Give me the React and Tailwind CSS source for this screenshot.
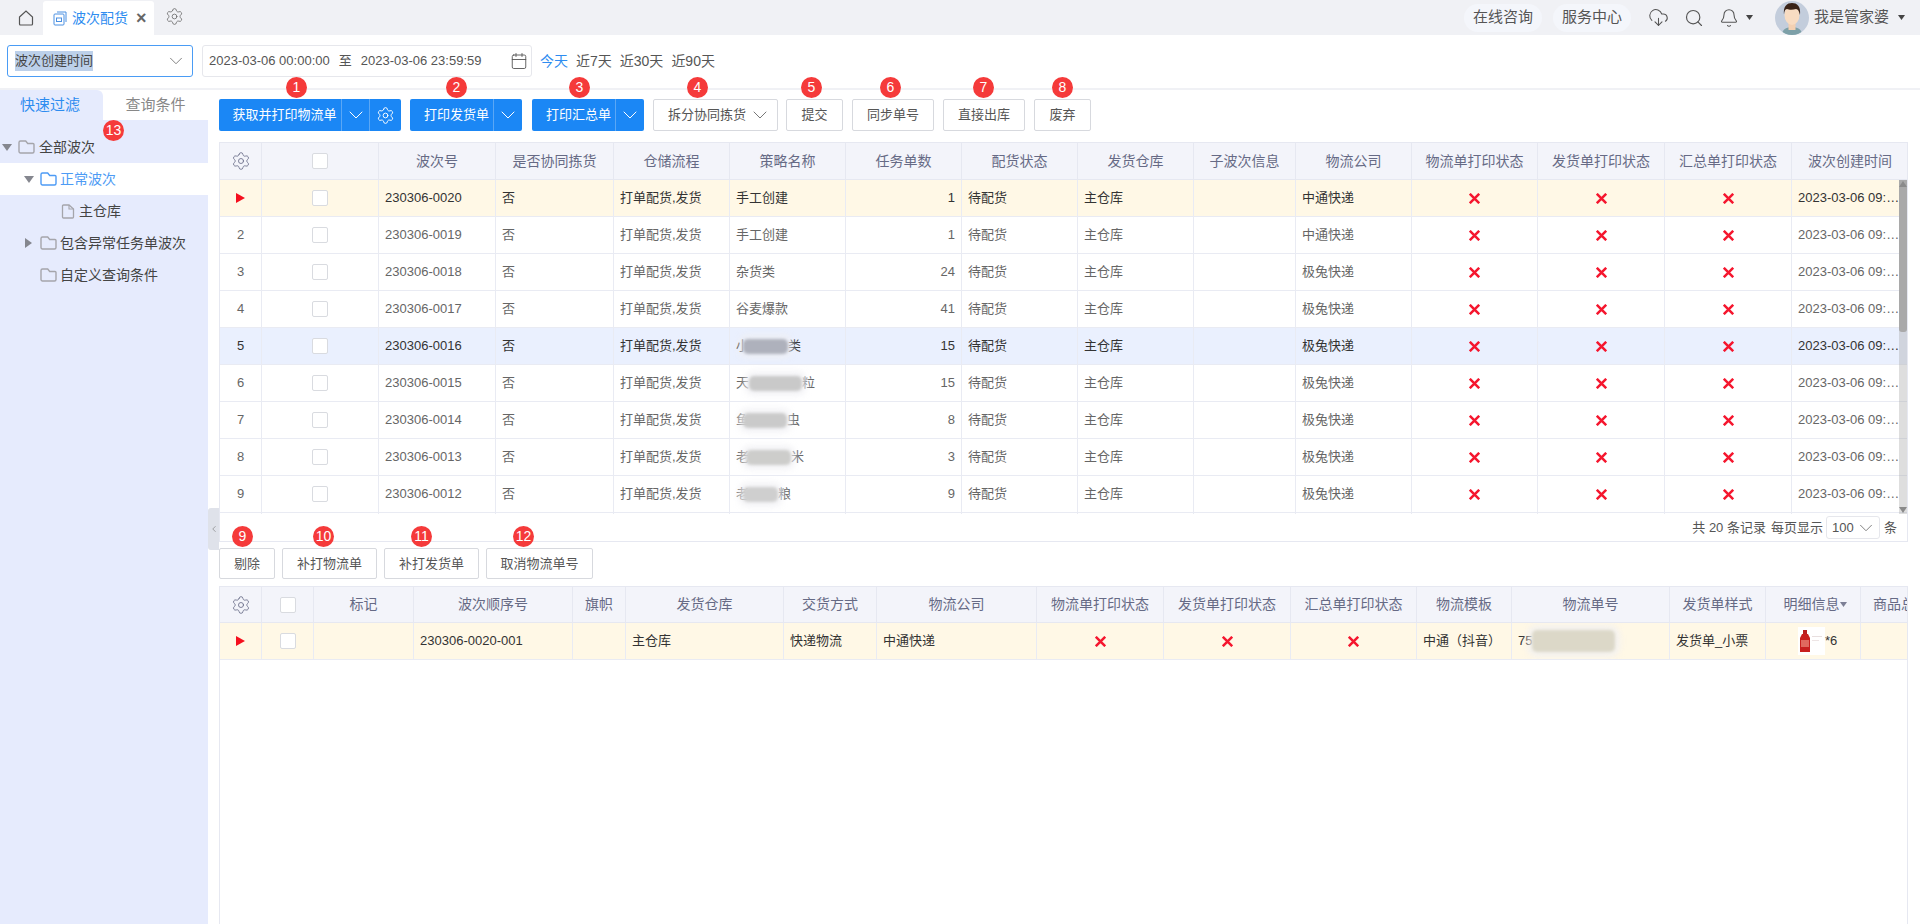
import React from 'react';
import { Settings, ChevronDown, ChevronLeft, Calendar, CloudDownload, Search, Bell } from 'lucide-react';

const mainCols = 'grid grid-cols-[42px_117px_117px_118px_116px_116px_116px_116px_116px_102px_116px_126px_127px_127px_117px]';
const subCols = 'grid grid-cols-[42px_52px_100px_159px_53px_158px_93px_160px_127px_127px_126px_95px_158px_96px_95px_47px]';

const mainHead = ['波次号', '是否协同拣货', '仓储流程', '策略名称', '任务单数', '配货状态', '发货仓库', '子波次信息', '物流公司', '物流单打印状态', '发货单打印状态', '汇总单打印状态', '波次创建时间'];
const subHead = ['标记', '波次顺序号', '旗帜', '发货仓库', '交货方式', '物流公司', '物流单打印状态', '发货单打印状态', '汇总单打印状态', '物流模板', '物流单号', '发货单样式'];

const rows = [
    { no: '0020', name: ['手工创建'], count: 1, express: '中通快递' },
    { no: '0019', name: ['手工创建'], count: 1, express: '中通快递' },
    { no: '0018', name: ['杂货类'], count: 24, express: '极兔快递' },
    { no: '0017', name: ['谷麦爆款'], count: 41, express: '极兔快递' },
    { no: '0016', name: ['小', '类'], blur: 'w-[45px] -ml-[6px] bg-[#aeb1bc]', count: 15, express: '极兔快递' },
    { no: '0015', name: ['天', '粒'], blur: 'w-[53px] bg-[#c9c9c9]', count: 15, express: '极兔快递' },
    { no: '0014', name: ['鱼', '虫'], blur: 'w-[44px] -ml-[6px] bg-[#cacaca]', count: 8, express: '极兔快递' },
    { no: '0013', name: ['老', '米'], blur: 'w-[45px] -ml-[3px] bg-[#cdcdcb]', count: 3, express: '极兔快递' },
    { no: '0012', name: ['老', '粮'], blur: 'w-[35px] -ml-[6px] bg-[#cfcfcf]', count: 9, express: '极兔快递' },
    { no: '0011', name: ['手工创建'], count: 2, express: '极兔快递' },
];

const topButtons = [
    { label: '提交', w: 'w-[57px]', dot: 'left-[15px]', n: 5 },
    { label: '同步单号', w: 'w-[82px]', dot: 'left-[28px]', n: 6 },
    { label: '直接出库', w: 'w-[82px]', dot: 'left-[30px]', n: 7 },
    { label: '废弃', w: 'w-[57px]', dot: 'left-[18px]', n: 8 },
];

const subButtons = [
    { label: '剔除', w: 'w-[56px]', dot: 'left-[13px]', n: 9 },
    { label: '补打物流单', w: 'w-[95px]', dot: 'left-[31px]', n: 10 },
    { label: '补打发货单', w: 'w-[95px]', dot: 'left-[27px]', n: 11 },
    { label: '取消物流单号', w: 'w-[107px]', dot: 'left-[27px]', n: 12 },
];

const Badge = ({ n, className }) => (
    <span className={`absolute w-[21px] h-[21px] rounded-full bg-[#f53a3a] text-white text-[14px] leading-[21px] text-center z-10 ${className}`}>{n}</span>
);

const RedX = () => (
    <svg width="11" height="11" viewBox="0 0 11 11" className="mx-auto">
        <path d="M.8.8 10.2 10.2M10.2.8.8 10.2" stroke="#f5162e" strokeWidth="2.5" />
    </svg>
);

const RowArrow = () => (
    <svg width="9" height="10" viewBox="0 0 9 10"><path d="M0 0 9 5 0 10z" fill="#f50f1e" /></svg>
);

const Check = () => <span className="block w-[16px] h-[16px] rounded-[2px] bg-white border border-[#d9dbe0]" />;

const FolderIcon = ({ color = '#a5a5ab', className = '' }) => (
    <svg width="17" height="14" viewBox="0 0 17 14" fill="none" className={className}>
        <path d="M1 2.5A1.5 1.5 0 0 1 2.5 1h5.2l2 2.5h5.3a1 1 0 0 1 1 1v7a1.5 1.5 0 0 1-1.5 1.5h-12A1.5 1.5 0 0 1 1 11.5z" stroke={color} strokeWidth="1.4" />
    </svg>
);

const FileIcon = () => (
    <svg width="14" height="15" viewBox="0 0 14 15" fill="none">
        <path d="M1.5 2a1 1 0 0 1 1-1h5.5L12.5 5v8a1 1 0 0 1-1 1h-9a1 1 0 0 1-1-1z" stroke="#a5a5ab" strokeWidth="1.3" />
        <path d="M8 1v4h4.5" stroke="#a5a5ab" strokeWidth="1.1" />
    </svg>
);

const Caret = ({ className = '' }) => (
    <svg width="10" height="7" viewBox="0 0 10 7" className={className}><path d="M0 0h10L5 7z" fill="#85878f" /></svg>
);

const Bottle = () => (
    <svg width="27" height="28" viewBox="0 0 27 28" className="bg-white shrink-0">
        <rect x="5" y="3" width="4" height="4" fill="#b92020" />
        <path d="M4 7h6l2 4v14H2V11z" fill="#c8201f" />
        <rect x="3" y="13" width="8" height="7" fill="#e06a5f" />
        <rect x="14" y="9" width="10" height="1" fill="#e8dfdf" />
        <rect x="14" y="13" width="7" height="1" fill="#eee5e5" />
    </svg>
);

const Avatar = () => (
    <svg width="34" height="34" viewBox="0 0 34 34" className="rounded-full">
        <rect width="34" height="34" fill="#c3cddc" />
        <path d="M7 34c0-6 5-8 10-8s10 2 10 8z" fill="#7da0a8" />
        <rect x="13.5" y="20" width="7" height="9" fill="#f3d0b2" />
        <ellipse cx="17" cy="14" rx="7.5" ry="10" fill="#f8dcc2" />
        <path d="M9 14C8 5 12 2 17 2s9 3 8 12c-1-4-2-6-4-6-3 1-7 1-9 0-2 0-3 3-3 6z" fill="#3a2418" />
    </svg>
);

const Blurred = ({ className }) => <span className={`inline-block shrink-0 blur-[1.5px] rounded-[5px] shadow-[0_0_5px_5px_rgba(240,240,244,0.7)] ${className}`} />;

const ToolButton = ({ label, w, dot, n }) => (
    <div className={`relative ${w} h-full`}>
        <Badge n={n} className={`-top-[22px] ${dot}`} />
        <button className="w-full h-full bg-white border border-[#d7d9de] rounded-[2px] text-[13px] text-[#555]">{label}</button>
    </div>
);

const SplitPrimary = ({ label, w, textW, n, dot }) => (
    <div className={`relative ${w} h-full flex bg-[#1b87f5] text-white text-[13px] rounded-[2px]`}>
        <Badge n={n} className={`-top-[22px] ${dot}`} />
        <span className={`${textW} pl-[10px] border-r border-[#5aa7f5] flex items-center justify-center`}>{label}</span>
        <span className="w-[28px] flex items-center justify-center"><ChevronDown size={24} strokeWidth={1} /></span>
    </div>
);

const HeadCell = ({ children, className = '' }) => (
    <div className={`flex items-center justify-center border-r border-[#e6e8f1] text-[14px] text-[#666a85] overflow-hidden whitespace-nowrap ${className}`}>{children}</div>
);

const Cell = ({ children, className = '' }) => (
    <div className={`flex items-center px-[6px] border-r border-[#e9ebf3] overflow-hidden whitespace-nowrap ${className}`}>{children}</div>
);

const TreeRow = ({ children, className = '' }) => (
    <div className={`h-[32px] flex items-center text-[14px] text-[#444] ${className}`}>{children}</div>
);

const MainRow = ({ row, index }) => {
    const bg = index === 0 ? 'bg-[#fff8e6]' : index === 4 ? 'bg-[#eaf0fe]' : 'bg-white';
    const text = index === 0 || index === 4 ? 'text-[#333]' : 'text-[#666]';
    return (
        <div className={`${mainCols} h-[37px] border-b border-[#e9ebf3] text-[13px] ${bg} ${text}`}>
            <Cell className="justify-center">{index === 0 ? <RowArrow /> : index + 1}</Cell>
            <Cell className="justify-center"><Check /></Cell>
            <Cell>230306-{row.no}</Cell>
            <Cell>否</Cell>
            <Cell>打单配货,发货</Cell>
            <Cell>
                {row.name[0]}
                {row.blur && <Blurred className={`h-[15px] ${row.blur}`} />}
                {row.name[1]}
            </Cell>
            <Cell className="justify-end">{row.count}</Cell>
            <Cell>待配货</Cell>
            <Cell>主仓库</Cell>
            <Cell />
            <Cell>{row.express}</Cell>
            <Cell><RedX /></Cell>
            <Cell><RedX /></Cell>
            <Cell><RedX /></Cell>
            <div className="flex items-center min-w-0 pl-[6px] pr-[8px]"><span className="truncate">2023-03-06 09:32:18</span></div>
        </div>
    );
};

export default function App() {
    return (
        <div className="w-[1920px] h-[924px] flex flex-col overflow-hidden bg-white font-['Liberation_Sans','Noto_Sans_CJK_SC',sans-serif]">
            {/* 顶部标签栏 */}
            <div className="h-[35px] flex bg-[#f0f1f5] shrink-0">
                <div className="w-[43px] flex items-center justify-center pl-[8px]">
                    <svg width="16" height="16" viewBox="0 0 16 16" fill="none">
                        <path d="M1.5 7 8 1l6.5 6v7a1 1 0 0 1-1 1h-11a1 1 0 0 1-1-1z" stroke="#555" strokeWidth="1.2" />
                    </svg>
                </div>
                <div className="w-[111px] mt-[1px] bg-white rounded-t-[3px] flex items-center pl-[10px]">
                    <svg width="14" height="15" viewBox="0 0 14 15" fill="none">
                        <rect x="1" y="3" width="10" height="11" rx="1" stroke="#4a90e2" />
                        <path d="M4 1h9v10" stroke="#4a90e2" />
                        <rect x="3.5" y="7" width="5" height="3.5" stroke="#4a90e2" />
                    </svg>
                    <span className="ml-[5px] text-[14px] text-[#2d8cf0]">波次配货</span>
                    <span className="ml-[8px] text-[18px] leading-none text-[#666] font-bold">×</span>
                </div>
                <div className="ml-[11px] flex items-center pb-[3px]"><Settings size={19} strokeWidth={1} color="#666" /></div>
                <div className="ml-auto flex items-center pr-[15px]">
                    <span className="w-[78px] h-[28px] flex items-center justify-center rounded-full bg-[#f4f6fb] text-[15px] text-[#555]">在线咨询</span>
                    <span className="ml-[11px] w-[78px] h-[28px] flex items-center justify-center rounded-full bg-[#f4f6fb] text-[15px] text-[#555]">服务中心</span>
                    <CloudDownload size={21} strokeWidth={1.2} color="#555" className="ml-[17px]" />
                    <Search size={20} strokeWidth={1.4} color="#555" className="ml-[15px]" />
                    <Bell size={20} strokeWidth={1.3} color="#555" className="ml-[15px]" />
                    <svg width="7" height="5" viewBox="0 0 7 5" className="ml-[7px]"><path d="M0 0h7L3.5 5z" fill="#444" /></svg>
                    <div className="ml-[22px]"><Avatar /></div>
                    <span className="ml-[5px] text-[15px] text-[#555]">我是管家婆</span>
                    <svg width="7" height="5" viewBox="0 0 7 5" className="ml-[9px]"><path d="M0 0h7L3.5 5z" fill="#444" /></svg>
                </div>
            </div>

            {/* 时间筛选 */}
            <div className="h-[55px] shrink-0 border-b-2 border-[#f0f1f5] flex items-start pt-[10px] pl-[7px] text-[13px] text-[#555]">
                <div className="w-[186px] h-[32px] border border-[#4a9cf5] rounded-[3px] flex items-center pl-[7px] pr-[5px]">
                    <span className="bg-[#bcd0ea] text-[#444]">波次创建时间</span>
                    <ChevronDown size={22} strokeWidth={1} color="#777" className="ml-auto" />
                </div>
                <div className="ml-[9px] w-[330px] h-[32px] border border-[#e6e7ec] rounded-[3px] flex items-center pl-[6px] pr-[3px]">
                    <span>2023-03-06 00:00:00</span>
                    <span className="ml-[9px]">至</span>
                    <span className="ml-[9px]">2023-03-06 23:59:59</span>
                    <Calendar size={18} strokeWidth={1.2} color="#555" className="ml-auto" />
                </div>
                <div className="ml-[8px] h-[32px] flex items-center text-[14px]">
                    <span className="text-[#2d8cf0]">今天</span>
                    <span className="ml-[8px]">近7天</span>
                    <span className="ml-[8px]">近30天</span>
                    <span className="ml-[8px]">近90天</span>
                </div>
            </div>

            <div className="flex-1 flex min-h-0">
                {/* 左侧树 */}
                <div className="w-[208px] shrink-0 bg-[#e6ebfd] relative">
                    <div className="h-[30px] flex text-[15px] bg-white">
                        <div className="w-[103px] bg-[#e6ebfd] rounded-tr-[6px] flex items-center pl-[20px] text-[#2d8cf0]">快速过滤</div>
                        <div className="flex-1 flex items-center justify-center text-[#888]">查询条件</div>
                    </div>
                    <Badge n={13} className="left-[103px] top-[30px] text-[13px]" />
                    <div className="pt-[11px]">
                        <TreeRow>
                            <Caret className="ml-[2px]" />
                            <FolderIcon className="ml-[6px]" />
                            <span className="ml-[4px]">全部波次</span>
                        </TreeRow>
                        <TreeRow className="bg-white !text-[#4d9bf5]">
                            <Caret className="ml-[24px]" />
                            <FolderIcon color="#4d9bf5" className="ml-[6px]" />
                            <span className="ml-[3px]">正常波次</span>
                        </TreeRow>
                        <TreeRow>
                            <span className="ml-[61px]"><FileIcon /></span>
                            <span className="ml-[4px]">主仓库</span>
                        </TreeRow>
                        <TreeRow>
                            <svg width="7" height="10" viewBox="0 0 7 10" className="ml-[25px]"><path d="M0 0v10l7-5z" fill="#85878f" /></svg>
                            <FolderIcon className="ml-[8px]" />
                            <span className="ml-[3px]">包含异常任务单波次</span>
                        </TreeRow>
                        <TreeRow>
                            <FolderIcon className="ml-[40px]" />
                            <span className="ml-[3px]">自定义查询条件</span>
                        </TreeRow>
                    </div>
                </div>

                {/* 右侧内容 */}
                <div className="flex-1 min-w-0 pl-[11px] pr-[12px] flex flex-col relative">
                    <div className="absolute left-0 top-[418px] w-[11px] h-[42px] bg-[#dfe2ea] rounded-l-[3px] flex items-center justify-center z-10">
                        <ChevronLeft size={10} strokeWidth={1.5} color="#777" />
                    </div>

                    <div className="mt-[9px] h-[32px] flex shrink-0">
                        <div className="relative w-[182px] h-full flex bg-[#1b87f5] text-white text-[13px] rounded-[2px]">
                            <Badge n={1} className="-top-[22px] left-[67px]" />
                            <span className="w-[123px] pl-[9px] border-r border-[#5aa7f5] flex items-center justify-center whitespace-nowrap">获取并打印物流单</span>
                            <span className="w-[28px] border-r border-[#5aa7f5] flex items-center justify-center"><ChevronDown size={24} strokeWidth={1} /></span>
                            <span className="flex-1 flex items-center justify-center"><Settings size={19} strokeWidth={1.2} /></span>
                        </div>
                        <div className="ml-[9px] h-full"><SplitPrimary label="打印发货单" w="w-[112px]" textW="w-[84px]" n={2} dot="left-[36px]" /></div>
                        <div className="ml-[10px] h-full"><SplitPrimary label="打印汇总单" w="w-[112px]" textW="w-[84px]" n={3} dot="left-[37px]" /></div>
                        <div className="relative ml-[9px] w-[125px] h-full">
                            <Badge n={4} className="-top-[22px] left-[34px]" />
                            <div className="w-full h-full bg-white border border-[#d7d9de] rounded-[2px] text-[13px] text-[#555] flex items-center pl-[14px]">
                                拆分协同拣货
                                <ChevronDown size={24} strokeWidth={1} color="#777" className="ml-[2px]" />
                            </div>
                        </div>
                        <div className="ml-[8px] flex gap-[9px] h-full">
                            {topButtons.map(b => <ToolButton key={b.n} {...b} />)}
                        </div>
                    </div>

                    {/* 波次表 */}
                    <div className="mt-[11px] h-[372px] shrink-0 relative overflow-hidden border-x border-t border-[#e6e8f1]">
                        <div className={`${mainCols} h-[37px] bg-[#f3f4fa] border-b border-[#e6e8f1]`}>
                            <HeadCell><Settings size={20} strokeWidth={1} color="#666a85" /></HeadCell>
                            <HeadCell><Check /></HeadCell>
                            {mainHead.map(h => <HeadCell key={h}>{h}</HeadCell>)}
                        </div>
                        {rows.map((row, i) => <MainRow key={row.no} row={row} index={i} />)}
                        {/* 滚动条 */}
                        <div className="absolute right-0 top-[37px] w-[8px] bottom-0 bg-[#a0a0a0]/35 flex flex-col">
                            <div className="h-[152px] bg-[#a9a9a9] rounded-b-[3px] flex justify-center pt-[1px]">
                                <svg width="8" height="6" viewBox="0 0 8 6"><path d="M0 6 4 0l4 6z" fill="#8a8a8a" /></svg>
                            </div>
                            <div className="mt-auto flex justify-center pb-[1px]">
                                <svg width="8" height="6" viewBox="0 0 8 6"><path d="M0 0h8L4 6z" fill="#8a8a8a" /></svg>
                            </div>
                        </div>
                    </div>
                    <div className="h-[28px] shrink-0 border-x border-b border-[#e6e8f1] flex items-center justify-end pr-[10px] text-[13px] text-[#555]">
                        <span>共 20 条记录</span>
                        <span className="ml-[5px]">每页显示</span>
                        <div className="ml-[3px] w-[54px] h-[23px] border border-[#e6e7ec] rounded-[3px] flex items-center pl-[5px] pr-[2px]">
                            100
                            <ChevronDown size={22} strokeWidth={1} color="#777" className="ml-auto" />
                        </div>
                        <span className="ml-[4px]">条</span>
                    </div>

                    <div className="mt-[6px] h-[31px] flex gap-[7px] shrink-0">
                        {subButtons.map(b => <ToolButton key={b.n} {...b} />)}
                    </div>

                    {/* 子任务表 */}
                    <div className="mt-[7px] flex-1 min-h-0 overflow-hidden border-x border-t border-[#e6e8f1]">
                        <div className={`${subCols} h-[36px] bg-[#f3f4fa] border-b border-[#e6e8f1]`}>
                            <HeadCell><Settings size={20} strokeWidth={1} color="#666a85" /></HeadCell>
                            <HeadCell><Check /></HeadCell>
                            {subHead.map(h => <HeadCell key={h}>{h}</HeadCell>)}
                            <HeadCell>
                                <span className="pl-[4px]">明细信息</span>
                                <svg width="7" height="5" viewBox="0 0 7 5"><path d="M0 0h7L3.5 5z" fill="#7c7f95" /></svg>
                            </HeadCell>
                            <HeadCell className="justify-start pl-[12px]">商品总数</HeadCell>
                        </div>
                        <div className={`${subCols} h-[37px] bg-[#fff8e6] border-b border-[#e9ebf3] text-[13px] text-[#333]`}>
                            <Cell className="justify-center"><RowArrow /></Cell>
                            <Cell className="justify-center"><Check /></Cell>
                            <Cell />
                            <Cell>230306-0020-001</Cell>
                            <Cell />
                            <Cell>主仓库</Cell>
                            <Cell>快递物流</Cell>
                            <Cell>中通快递</Cell>
                            <Cell><RedX /></Cell>
                            <Cell><RedX /></Cell>
                            <Cell><RedX /></Cell>
                            <Cell>中通（抖音）</Cell>
                            <Cell>75<Blurred className="w-[83px] h-[22px] bg-[#dcd8c8]" /></Cell>
                            <Cell>发货单_小票</Cell>
                            <Cell className="!pl-[32px] !pr-0"><Bottle />*6</Cell>
                            <Cell />
                        </div>
                    </div>
                </div>
            </div>
        </div>
    );
}
